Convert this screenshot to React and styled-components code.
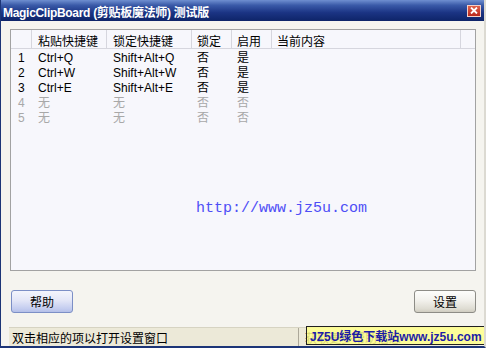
import styled, { createGlobalStyle } from "styled-components"

const GlobalStyle = createGlobalStyle`
  html, body {
    margin: 0;
    padding: 0;
    background: #f5f4ef;
  }
  body {
    font-family: "Liberation Sans", "Noto Sans CJK SC", sans-serif;
    font-size: 12px;
  }
`

const Window = styled.div`
  position: relative;
  width: 486px;
  height: 348px;
  box-sizing: border-box;
  display: flex;
  flex-direction: column;
  background: #f5f4ef;
  border-left: 1px solid #1c3577;
  border-right: 2px solid #dcdad2;
  border-bottom: 2px solid #1c3577;
  overflow: hidden;
`

const TitleBar = styled.div`
  height: 21px;
  flex: none;
  display: flex;
  align-items: center;
  justify-content: space-between;
  padding: 0 3px 0 2px;
  margin-right: -2px;
  background: linear-gradient(to bottom, #6f8fd0 0%, #3a5aa8 25%, #1b3484 60%, #0e2468 100%);
`

const Title = styled.span`
  color: #ffffff;
  font-weight: bold;
  font-size: 12px;
  letter-spacing: -0.3px;
  white-space: nowrap;
  padding-top: 1px;
`

const CloseButton = styled.div`
  width: 12px;
  height: 10px;
  margin-right: 2px;
  border: 1px solid #f4d0c8;
  background: linear-gradient(to bottom, #e0604a, #b8281c);
  display: flex;
  align-items: center;
  justify-content: center;
`

const Body = styled.div`
  flex: 1;
  display: flex;
  flex-direction: column;
  padding: 8px 8px 0 9px;
`

const ListBox = styled.div`
  height: 242px;
  box-sizing: border-box;
  border: 1px solid #a2a2a2;
  background: #f7f7fc;
`

const HeaderRow = styled.div`
  display: flex;
  height: 18px;
  border-bottom: 1px solid #d6d6de;
`

const HeaderCell = styled.div`
  width: ${(p) => p.$w}px;
  flex: ${(p) => (p.$w ? "none" : 1)};
  box-sizing: border-box;
  padding: 3px 0 0 ${(p) => p.$pad}px;
  border-right: ${(p) => (p.$last ? "none" : "1px solid #d6d6de")};
  font-family: "Noto Sans CJK SC", sans-serif;
  font-size: 12px;
  line-height: 15px;
  color: #000;
  white-space: nowrap;
`

const Rows = styled.div`
  padding-top: 2px;
`

const Row = styled.div`
  display: flex;
  height: 15px;
  align-items: center;
  color: ${(p) => (p.$off ? "#a8a8a8" : "#000")};
`

const Cell = styled.div`
  width: ${(p) => p.$w}px;
  flex: none;
  box-sizing: border-box;
  padding-left: ${(p) => p.$pad}px;
  font-family: "Liberation Sans", "Noto Sans CJK SC", sans-serif;
  font-size: 12px;
  line-height: 15px;
  white-space: nowrap;
`

const UrlArea = styled.div`
  display: flex;
  justify-content: flex-start;
  padding: 74px 0 0 185px;
`

const Url = styled.span`
  font-family: "Liberation Mono", monospace;
  font-size: 15px;
  line-height: 17px;
  color: #4e4ef6;
`

const ButtonRow = styled.div`
  display: flex;
  justify-content: space-between;
  margin-top: 19px;
  padding: 0 0 0 1px;
`

const Button = styled.div`
  width: 62px;
  height: 23px;
  box-sizing: border-box;
  border: 1px solid ${(p) => (p.$blue ? "#7c8fc6" : "#8d8c86")};
  border-radius: 3px;
  display: flex;
  align-items: center;
  justify-content: center;
  font-family: "Noto Sans CJK SC", sans-serif;
  font-size: 12px;
  color: #000;
  background: ${(p) =>
    p.$blue
      ? "linear-gradient(to bottom, #f4f5fc 0%, #e3e6f7 45%, #c3ccef 85%, #b4bfe8 100%)"
      : "linear-gradient(to bottom, #fdfdfb 0%, #f2f1ec 45%, #dedcd2 85%, #cfccc0 100%)"};
`

const StatusBar = styled.div`
  margin-top: 14px;
  height: 19px;
  flex: none;
  display: flex;
  background: #ece9d8;
  border-top: 1px solid #d6d3c2;
  margin-left: -1px;
  margin-right: -2px;
`

const StatusPane = styled.div`
  width: ${(p) => (p.$w ? `${p.$w}px` : "auto")};
  flex: ${(p) => (p.$w ? "none" : 1)};
  box-sizing: border-box;
  padding-left: ${(p) => p.$pad}px;
  border-right: ${(p) => (p.$sep ? "1px solid #aca899" : "none")};
  display: flex;
  align-items: center;
  font-family: "Noto Sans CJK SC", sans-serif;
  font-size: 12px;
  color: #000;
  white-space: nowrap;
`

const Watermark = styled.div`
  position: absolute;
  left: 305px;
  bottom: 1px;
  width: 180px;
  height: 19px;
  box-sizing: border-box;
  border: 1px solid #202020;
  background: rgba(255, 255, 140, 0.84);
  display: flex;
  align-items: center;
  padding-left: 3px;
  font-family: "Liberation Sans", "Noto Sans CJK SC", sans-serif;
  font-weight: bold;
  font-size: 12px;
  color: #1c1ca6;
  white-space: nowrap;
`

const columns = [
  { w: 21, pad: 0, label: "" },
  { w: 75, pad: 6, label: "粘贴快捷键" },
  { w: 85, pad: 6, label: "锁定快捷键" },
  { w: 40, pad: 5, label: "锁定" },
  { w: 40, pad: 5, label: "启用" },
  { w: 189, pad: 5, label: "当前内容" },
  { w: 0, pad: 0, label: "", last: true },
]

const rows = [
  { n: "1", paste: "Ctrl+Q", lock: "Shift+Alt+Q", locked: "否", on: "是" },
  { n: "2", paste: "Ctrl+W", lock: "Shift+Alt+W", locked: "否", on: "是" },
  { n: "3", paste: "Ctrl+E", lock: "Shift+Alt+E", locked: "否", on: "是" },
  { n: "4", paste: "无", lock: "无", locked: "否", on: "否", off: true },
  { n: "5", paste: "无", lock: "无", locked: "否", on: "否", off: true },
]

function App() {
  return (
    <>
      <GlobalStyle />
      <Window>
        <TitleBar>
          <Title>MagicClipBoard (剪贴板魔法师) 测试版</Title>
          <CloseButton>
            <svg width="8" height="7" viewBox="0 0 8 7">
              <path d="M1 0.5 L7 6.5 M7 0.5 L1 6.5" stroke="#fff" strokeWidth="1.8" />
            </svg>
          </CloseButton>
        </TitleBar>
        <Body>
          <ListBox>
            <HeaderRow>
              {columns.map((c, i) => (
                <HeaderCell key={i} $w={c.w} $pad={c.pad} $last={c.last}>
                  {c.label}
                </HeaderCell>
              ))}
            </HeaderRow>
            <Rows>
              {rows.map((r) => (
                <Row key={r.n} $off={r.off}>
                  <Cell $w={21} $pad={7}>{r.n}</Cell>
                  <Cell $w={75} $pad={6}>{r.paste}</Cell>
                  <Cell $w={85} $pad={6}>{r.lock}</Cell>
                  <Cell $w={40} $pad={5}>{r.locked}</Cell>
                  <Cell $w={40} $pad={5}>{r.on}</Cell>
                </Row>
              ))}
            </Rows>
            <UrlArea>
              <Url>http://www.jz5u.com</Url>
            </UrlArea>
          </ListBox>
          <ButtonRow>
            <Button $blue>帮助</Button>
            <Button>设置</Button>
          </ButtonRow>
          <StatusBar>
            <StatusPane $w={290} $pad={3} $sep>双击相应的项以打开设置窗口</StatusPane>
            <StatusPane $pad={6}>获取更多帮助信息</StatusPane>
          </StatusBar>
        </Body>
        <Watermark>JZ5U绿色下载站www.jz5u.com</Watermark>
      </Window>
    </>
  )
}

export default App
